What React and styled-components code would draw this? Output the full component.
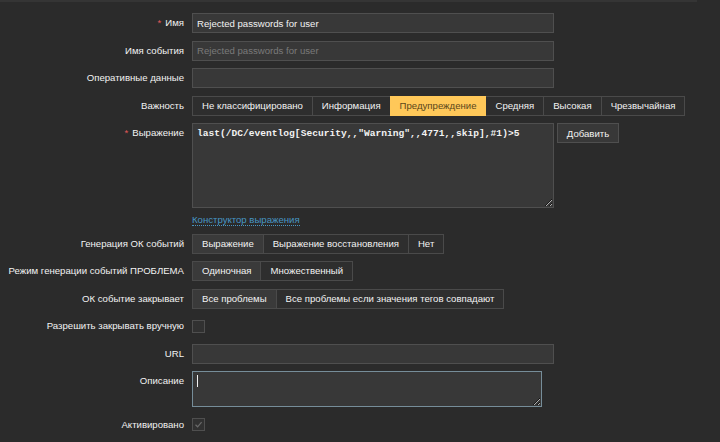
import React from 'react'
import styled, { createGlobalStyle, css } from 'styled-components'

const GlobalStyle = createGlobalStyle`
  html, body {
    margin: 0;
    background: #2b2b2b;
  }
  body {
    font-family: "Liberation Sans", Arial, sans-serif;
    font-size: 9.6px;
    color: #f2f2f2;
  }
`

const TopRule = styled.div`
  width: 697px;
  height: 2px;
  background: #353535;
`

const Form = styled.div`
  display: grid;
  grid-template-columns: 184px 1fr;
  column-gap: 8px;
  row-gap: 7.5px;
  padding-top: 11px;
`

const Label = styled.div`
  text-align: right;
  line-height: 20px;
  white-space: nowrap;
`

const Star = styled.span`
  color: #e45959;
  margin-right: 4px;
`

const Field = styled.div`
  display: flex;
  flex-direction: ${p => (p.column ? 'column' : 'row')};
  align-items: flex-start;
  min-height: 20px;
  ${p => p.center && css`align-items: center;`}
`

const fieldBox = css`
  box-sizing: border-box;
  background: #383838;
  border: 1px solid #4f4f4f;
  color: #f2f2f2;
  font-family: "Liberation Sans", Arial, sans-serif;
  font-size: 9.6px;
  outline: none;
  margin: 0;
`

const Input = styled.input`
  ${fieldBox};
  width: 362px;
  height: 20px;
  padding: 0 4px;
  &::placeholder { color: #7a7a7a; }
`

const Area = styled.textarea`
  ${fieldBox};
  color-scheme: dark;
  display: block;
  width: ${p => p.w}px;
  height: ${p => p.h}px;
  padding: 4px 4px;
  resize: both;
  ${p => p.mono && css`
    font-family: "Liberation Mono", "Courier New", monospace;
    font-weight: bold;
    font-size: 9.6px;
    line-height: 12px;
  `}
  ${p => p.focused && css`border-color: #768d99;`}
`

const AreaWrap = styled.div`
  position: relative;
`

const Caret = styled.span`
  position: absolute;
  left: 5px;
  top: 4px;
  width: 1px;
  height: 12px;
  background: #f2f2f2;
`

const Button = styled.button`
  ${fieldBox};
  height: 20px;
  width: 62px;
  margin-left: 3px;
  padding: 0;
  cursor: pointer;
`

const Link = styled.a`
  color: #4796c4;
  text-decoration: none;
  border-bottom: 1px dotted #4796c4;
  line-height: 11px;
  margin-top: 6px;
`

const Radio = styled.div`
  display: flex;
`

const RadioItem = styled.div`
  box-sizing: border-box;
  height: 20px;
  line-height: 18px;
  padding: 0 9px;
  border: 1px solid #4a4a4a;
  background: ${p => (p.active ? '#3a3a3a' : '#2e2e2e')};
  color: #f2f2f2;
  white-space: nowrap;
  & + & { margin-left: -1px; }
  ${p => p.warn && css`
    background: #ffc859;
    border-color: #ffc859;
    color: #5a4619;
    position: relative;
  `}
`

const Check = styled.div`
  box-sizing: border-box;
  width: 13px;
  height: 13px;
  border: 1px solid #4f4f4f;
  background: #313131;
  display: flex;
  align-items: center;
  justify-content: center;
`

function RadioList({ items, active, warn }) {
  return (
    <Radio>
      {items.map((t, i) => (
        <RadioItem key={t} active={i === active && !warn} warn={warn && i === active}>
          {t}
        </RadioItem>
      ))}
    </Radio>
  )
}

const severities = [
  'Не классифицировано',
  'Информация',
  'Предупреждение',
  'Средняя',
  'Высокая',
  'Чрезвычайная',
]

export default function App() {
  return (
    <>
      <GlobalStyle />
      <TopRule />
      <Form>
        <Label><Star>*</Star>Имя</Label>
        <Field><Input defaultValue="Rejected passwords for user" /></Field>

        <Label>Имя события</Label>
        <Field><Input placeholder="Rejected passwords for user" /></Field>

        <Label>Оперативные данные</Label>
        <Field><Input /></Field>

        <Label>Важность</Label>
        <Field><RadioList items={severities} active={2} warn /></Field>

        <Label><Star>*</Star>Выражение</Label>
        <Field column>
          <Field>
            <Area
              mono
              w={362}
              h={85}
              defaultValue={'last(/DC/eventlog[Security,,"Warning",,4771,,skip],#1)>5'}
            />
            <Button>Добавить</Button>
          </Field>
          <Link>Конструктор выражения</Link>
        </Field>

        <Label>Генерация ОК событий</Label>
        <Field>
          <RadioList items={['Выражение', 'Выражение восстановления', 'Нет']} active={0} />
        </Field>

        <Label>Режим генерации событий ПРОБЛЕМА</Label>
        <Field>
          <RadioList items={['Одиночная', 'Множественный']} active={0} />
        </Field>

        <Label>ОК событие закрывает</Label>
        <Field>
          <RadioList
            items={['Все проблемы', 'Все проблемы если значения тегов совпадают']}
            active={0}
          />
        </Field>

        <Label>Разрешить закрывать вручную</Label>
        <Field center><Check /></Field>

        <Label>URL</Label>
        <Field><Input /></Field>

        <Label>Описание</Label>
        <Field>
          <AreaWrap>
            <Area w={350} h={36} focused />
            <Caret />
          </AreaWrap>
        </Field>

        <Label>Активировано</Label>
        <Field center>
          <Check>
            <svg width="9" height="9" viewBox="0 0 9 9">
              <path d="M1.5 4.8 L3.6 6.8 L7.6 2.2" fill="none" stroke="#6a6a6a" strokeWidth="1.2" />
            </svg>
          </Check>
        </Field>
      </Form>
    </>
  )
}
